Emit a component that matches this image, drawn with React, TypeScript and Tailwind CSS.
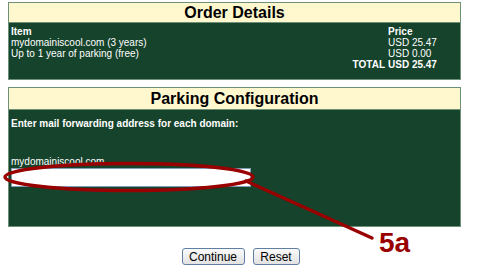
export default function App() {
  return (
    <div className="relative h-[272px] w-[477px] overflow-hidden bg-white font-['Liberation_Sans',Arial,sans-serif]">
      <div className="ml-[8px] flex w-[453px] flex-col pt-[2px]">
        {/* Order Details */}
        <div className="border border-[#6e8f78]">
          <div className="flex h-[20px] items-center justify-center border-b border-[#6e8f78] bg-[#fff8cf] text-[16px] font-bold leading-none text-black">
            Order Details
          </div>
          <div className="h-[56px] bg-[#16432b] px-[2px] pt-[3px] text-[10px] leading-[11px] text-white">
            <div className="flex">
              <div className="w-[377px]">
                <div className="font-bold">Item</div>
                <div>mydomainiscool.com (3 years)</div>
                <div>Up to 1 year of parking (free)</div>
                <div className="pr-[3px] text-right font-bold">TOTAL</div>
              </div>
              <div>
                <div className="font-bold">Price</div>
                <div>USD 25.47</div>
                <div>USD 0.00</div>
                <div className="font-bold">USD 25.47</div>
              </div>
            </div>
          </div>
        </div>

        {/* Parking Configuration */}
        <div className="mt-[7px] border border-[#6e8f78]">
          <div className="flex h-[22px] items-center justify-center border-b border-[#6e8f78] bg-[#fff8cf] text-[16px] font-bold leading-none text-black">
            Parking Configuration
          </div>
          <div className="flex h-[116px] flex-col bg-[#16432b] px-[2px] pt-[8px] text-[10px] leading-[11px] text-white">
            <div className="font-bold">Enter mail forwarding address for each domain:</div>
            <div className="mt-[27px]">mydomainiscool.com</div>
            <input
              type="text"
              className="mt-[1px] h-[19px] w-[240px] border border-[#7f9db9] bg-white px-[2px] text-[11px] text-black outline-none"
            />
          </div>
        </div>

        {/* Buttons */}
        <div className="mt-[21px] flex justify-center gap-[8px] pl-[12px]">
          <button className="h-[17px] w-[63px] rounded-[3px] border border-[#5f7fa3] bg-gradient-to-b from-[#fafafa] to-[#e2e2e2] text-[12px] leading-none text-black">
            Continue
          </button>
          <button className="h-[17px] w-[47px] rounded-[3px] border border-[#5f7fa3] bg-gradient-to-b from-[#fafafa] to-[#e2e2e2] text-[12px] leading-none text-black">
            Reset
          </button>
        </div>
      </div>

      {/* Annotation overlay */}
      <svg className="pointer-events-none absolute left-0 top-0" width="477" height="272">
        <ellipse cx="129" cy="177" rx="124" ry="13.5" fill="none" stroke="#990000" strokeWidth="3.5" />
        <path d="M246 181 L372 238" stroke="#990000" strokeWidth="3.5" strokeLinecap="round" />
      </svg>
      <div className="absolute left-[379px] top-[229px] text-[28px] font-bold leading-none text-[#990000]">5a</div>
    </div>
  );
}
